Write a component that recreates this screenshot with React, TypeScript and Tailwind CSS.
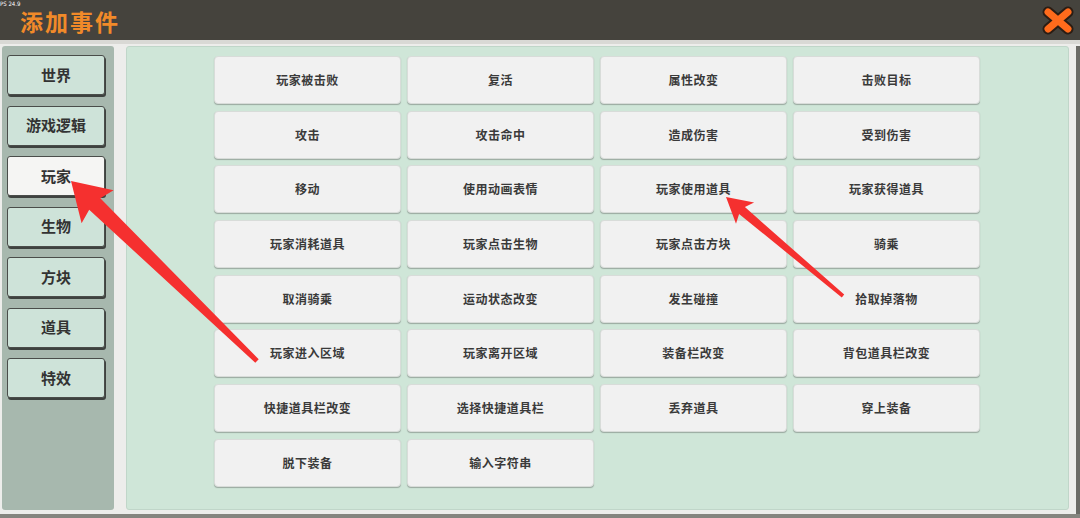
import React from 'react';

const categories = ['世界', '游戏逻辑', '玩家', '生物', '方块', '道具', '特效'];

const events = [
  '玩家被击败', '复活', '属性改变', '击败目标',
  '攻击', '攻击命中', '造成伤害', '受到伤害',
  '移动', '使用动画表情', '玩家使用道具', '玩家获得道具',
  '玩家消耗道具', '玩家点击生物', '玩家点击方块', '骑乘',
  '取消骑乘', '运动状态改变', '发生碰撞', '拾取掉落物',
  '玩家进入区域', '玩家离开区域', '装备栏改变', '背包道具栏改变',
  '快捷道具栏改变', '选择快捷道具栏', '丢弃道具', '穿上装备',
  '脱下装备', '输入字符串',
];

// arrow polygon from tail to tip
function arrow(tx: number, ty: number, hx: number, hy: number, headLen: number, headHalf: number, neck: number, tail: number) {
  const dx = hx - tx;
  const dy = hy - ty;
  const len = Math.hypot(dx, dy);
  const ux = dx / len;
  const uy = dy / len;
  const nx = -uy;
  const ny = ux;
  const bx = hx - ux * headLen;
  const by = hy - uy * headLen;
  const nbx = hx - ux * (headLen - 4);
  const nby = hy - uy * (headLen - 4);
  const pts = [
    [hx, hy],
    [bx + nx * headHalf, by + ny * headHalf],
    [nbx + nx * neck, nby + ny * neck],
    [tx + nx * tail, ty + ny * tail],
    [tx - nx * tail, ty - ny * tail],
    [nbx - nx * neck, nby - ny * neck],
    [bx - nx * headHalf, by - ny * headHalf],
  ];
  return pts.map((p) => p[0].toFixed(1) + ',' + p[1].toFixed(1)).join(' ');
}

export default function App() {
  return (
    <div className="relative w-[1080px] h-[518px] overflow-hidden bg-[#ededeb] font-['Noto_Sans_CJK_SC',sans-serif]">
      {/* header */}
      <div className="relative h-[40px] bg-[#45433d] flex items-center pl-[20px]">
        <span className="absolute left-0 top-0 text-[6px] leading-[8px] text-white font-['DejaVu_Sans_Condensed',sans-serif]">PS 24.9</span>
        <h1 className="text-[23px] font-bold tracking-[2px] text-[#f18a29] leading-none mt-[3px]">添加事件</h1>
        <svg className="absolute left-[1042px] top-[6px]" width="32" height="29" viewBox="0 0 32 29">
          <path d="M6 6 L26 23 M26 6 L6 23" stroke="#2b1d14" strokeWidth="11" strokeLinecap="round" />
          <path d="M6 6 L26 23 M26 6 L6 23" stroke="#ff6b1c" strokeWidth="7" strokeLinecap="round" />
        </svg>
      </div>
      <div className="h-[4px] bg-[#d9d9d5]" />

      {/* body */}
      <div className="flex pt-[2px] h-[470px]">
        <div className="ml-[2px] w-[112px] h-[464px] bg-[#a7b8ae] rounded-[3px] pt-[9px] pl-[5px] flex flex-col gap-[10.5px]">
          {categories.map((c) => (
            <div
              key={c}
              className={
                'w-[98px] h-[40px] shrink-0 rounded-[3px] border border-[#4a4d4a] shadow-[1px_2px_0_#3e423f] flex items-center justify-center text-[15px] font-bold text-[#333] ' +
                (c === '玩家' ? 'bg-[#f5f5f3]' : 'bg-[#cee3d9]')
              }
            >
              {c}
            </div>
          ))}
        </div>

        <div className="ml-[12px] w-[943px] h-[464px] bg-[#cfe6d8] rounded-[3px] border border-[#c0d6c9] pt-[9px] pl-[87px]">
          <div className="grid grid-cols-[repeat(4,187px)] gap-x-[6px] gap-y-[6.7px]">
            {events.map((e) => (
              <div
                key={e}
                className="h-[48px] bg-[#f1f1f1] rounded-[4px] border border-[#d8dcd9] shadow-[0_1px_1px_#9aa9a0] flex items-center justify-center text-[12px] font-bold tracking-[0.5px] text-[#3a3a3a]"
              >
                {e}
              </div>
            ))}
          </div>
        </div>
        <div className="ml-[7px] w-[4px] h-[478px] bg-[#6b6b66]" />
      </div>
      <div className="absolute left-0 bottom-0 w-full h-[4px] bg-[#85857f]" />

      {/* annotation arrows */}
      <svg className="absolute inset-0 pointer-events-none" width="1080" height="518">
        <polygon points={arrow(257, 361, 71, 181, 37, 23, 8, 2.5)} fill="#f5302f" />
        <polygon points={arrow(843, 296, 726, 197, 25, 14, 4.5, 1.8)} fill="#f5302f" />
      </svg>
    </div>
  );
}
